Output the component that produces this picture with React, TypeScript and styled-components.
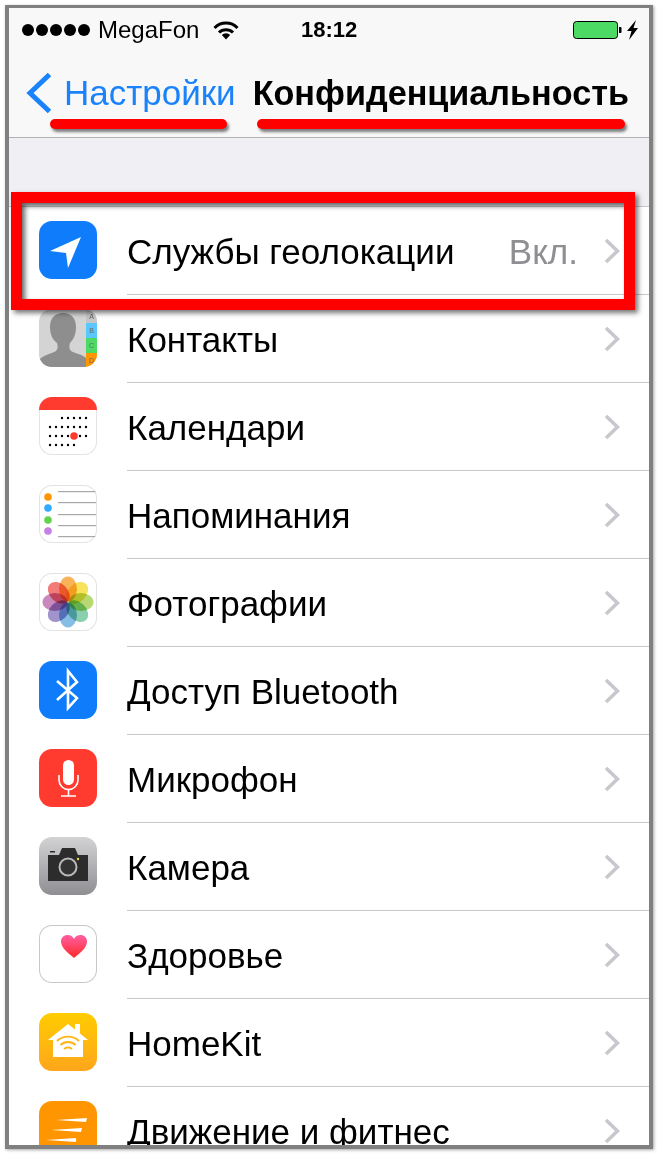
import React from 'react'
import styled, { createGlobalStyle } from 'styled-components'

const GlobalStyle = createGlobalStyle`
  html, body {
    margin: 0;
    padding: 0;
    background: #fff;
    font-family: "Liberation Sans", Arial, sans-serif;
  }
`

const Page = styled.div`
  width: 658px;
  height: 1154px;
  padding: 5px;
  box-sizing: border-box;
  overflow: hidden;
`

const Frame = styled.div`
  position: relative;
  width: 648px;
  height: 1144px;
  box-sizing: border-box;
  border: solid #808080;
  border-width: 3px 4px 4px 4px;
  box-shadow: 1px 1px 3px rgba(0, 0, 0, 0.35);
  overflow: hidden;
  background: #fff;
  display: flex;
  flex-direction: column;
`

const Header = styled.header`
  height: 130px;
  box-sizing: border-box;
  flex: none;
  background: #f8f8f8;
  border-bottom: 1px solid #b2b2b2;
  display: flex;
  flex-direction: column;
`

const StatusBar = styled.div`
  height: 44px;
  flex: none;
  padding: 0 10px 0 13px;
  display: flex;
  align-items: center;
  color: #000;
  font-size: 24px;
`

const Dots = styled.div`
  display: flex;
  gap: 2px;
  margin-right: 8px;
`

const Dot = styled.span`
  width: 12px;
  height: 12px;
  border-radius: 50%;
  background: #000;
`

const Carrier = styled.span`
  width: 115px;
`

const Time = styled.span`
  margin-left: 62px;
  margin-right: auto;
  font-size: 22px;
  font-weight: 700;
`

const NavBar = styled.nav`
  flex: 1;
  display: flex;
  align-items: center;
  padding: 0 0 3px 17px;
`

const BackLabel = styled.span`
  color: #1a82fb;
  font-size: 35px;
  margin-left: 12px;
  margin-right: 17px;
  white-space: nowrap;
`

const Title = styled.span`
  color: #000;
  font-size: 34.2px;
  font-weight: 700;
  white-space: nowrap;
`

const Gap = styled.div`
  height: 69px;
  box-sizing: border-box;
  flex: none;
  background: #efeff4;
  border-bottom: 1px solid #c8c7cc;
`

const List = styled.div`
  flex: 1;
  background: #fff;
`

const Row = styled.div`
  height: 88px;
  padding-left: 30px;
  display: flex;
  align-items: center;
`

const Icon = styled.div<{ $bg: string; $edge?: string }>`
  width: 58px;
  height: 58px;
  margin-top: -2px;
  flex: none;
  border-radius: 13px;
  overflow: hidden;
  background: ${(p) => p.$bg};
  box-shadow: ${(p) => (p.$edge ? `inset 0 0 0 1px ${p.$edge}` : 'none')};

  svg {
    display: block;
  }
`

const RowBody = styled.div<{ $last?: boolean }>`
  flex: 1;
  align-self: stretch;
  box-sizing: border-box;
  margin-left: 30px;
  padding-right: 29px;
  display: flex;
  align-items: center;
  border-bottom: ${(p) => (p.$last ? 'none' : '1px solid #c8c7cc')};
`

const Label = styled.span`
  flex: 1;
  padding-top: 2px;
  font-size: 35px;
  color: #000;
  white-space: nowrap;
`

const Value = styled.span`
  padding-top: 2px;
  font-size: 35px;
  color: #8e8e93;
  margin-right: 26px;
`

const RedBox = styled.div`
  position: absolute;
  left: 2px;
  top: 184px;
  width: 624px;
  height: 118px;
  box-sizing: border-box;
  border: 11px solid #fe0000;
  box-shadow: 3px 3px 5px rgba(0, 0, 0, 0.55), inset 3px 3px 5px rgba(0, 0, 0, 0.6);
`

const Underline = styled.div<{ $left: number; $width: number }>`
  position: absolute;
  top: 111px;
  left: ${(p) => p.$left}px;
  width: ${(p) => p.$width}px;
  height: 10px;
  border-radius: 5px;
  background: #fe0000;
  box-shadow: 2px 3px 3px rgba(0, 0, 0, 0.5);
`

const Wifi = () => (
  <svg width="26" height="19" viewBox="0 0 26 19" style={{ flex: 'none' }}>
    <g fill="none" stroke="#000" strokeWidth="3">
      <path d="M1.5 7 A16 16 0 0 1 24.5 7" />
      <path d="M6 11.5 A10 10 0 0 1 20 11.5" />
    </g>
    <path d="M8.8 14 A6 6 0 0 1 17.2 14 L13 18.5 Z" fill="#000" />
  </svg>
)

const Battery = () => (
  <svg width="66" height="20" viewBox="0 0 66 20" style={{ flex: 'none' }}>
    <rect x="0.5" y="1.5" width="44" height="17" rx="3" fill="#4cd964" stroke="#000" />
    <path d="M46 7 h1.5 a1 1 0 0 1 1 1 v4 a1 1 0 0 1 -1 1 H46 Z" fill="#000" />
    <path d="M63 0 L54 11 H58.5 L56 20 L65 8 H60.5 Z" fill="#000" />
  </svg>
)

const BackChevron = () => (
  <svg width="26" height="42" viewBox="0 0 26 42" style={{ flex: 'none' }}>
    <path d="M23.5 2.5 L4 21 L23.5 39.5" fill="none" stroke="#1a82fb" strokeWidth="5" />
  </svg>
)

const Chevron = () => (
  <svg width="16" height="26" viewBox="0 0 16 26" style={{ flex: 'none' }}>
    <path d="M2 2 L13.5 13 L2 24" fill="none" stroke="#c7c7cc" strokeWidth="3.5" />
  </svg>
)

const Svg: React.FC<{ children: React.ReactNode }> = ({ children }) => (
  <svg width="58" height="58" viewBox="0 0 58 58">
    {children}
  </svg>
)

const LocationIcon = () => (
  <Icon $bg="#0f7dfb">
    <Svg>
      <path d="M11 30 L42 16 L29 47 L27 32 Z" fill="#fff" />
    </Svg>
  </Icon>
)

const tabs: [number, number, string, string][] = [
  [0, 14, '#c6c6c6', 'A'],
  [14, 15, '#5ac8fa', 'B'],
  [29, 15, '#4cd964', 'C'],
  [44, 14, '#ff9500', 'D'],
]

const ContactsIcon = () => (
  <Icon $bg="#d4d4d4">
    <Svg>
      <path
        d="M0 58 V51 C4 46 12 45 17 42 C19 40 19 37 18 34 C14 31 11 26 11 18 C11 9 16 4 24 4 C32 4 37 9 37 18 C37 26 34 31 31 34 C30 37 30 40 32 42 C37 45 43 45 47 49 V58 Z"
        fill="#8e8e8e"
      />
      {tabs.map(([y, h, c, l]) => (
        <g key={l}>
          <rect x="47" y={y} width="11" height={h} fill={c} />
          <text x="52.5" y={y + h / 2 + 2.5} fontSize="7" textAnchor="middle" fill="#666">
            {l}
          </text>
        </g>
      ))}
    </Svg>
  </Icon>
)

const calendarDots = [
  [21, [23, 29, 35, 41, 47]],
  [30, [11, 17, 23, 29, 35, 41, 47]],
  [39, [11, 17, 23, 29, 41, 47]],
  [48, [11, 17, 23, 29, 35]],
] as [number, number[]][]

const CalendarIcon = () => (
  <Icon $bg="#fff" $edge="#e3e3e3">
    <Svg>
      <rect width="58" height="13" fill="#ff3b30" />
      {calendarDots.map(([y, xs]) =>
        xs.map((x) => <circle key={`${x}-${y}`} cx={x} cy={y} r="1.2" fill="#000" />)
      )}
      <circle cx="35" cy="39" r="3.8" fill="#ff3b30" />
    </Svg>
  </Icon>
)

const reminderLines = [6, 17, 29, 40, 51]
const reminderDots: [number, string][] = [
  [12, '#ff9500'],
  [23, '#34aaff'],
  [35, '#62d24c'],
  [46, '#c77fe3'],
]

const RemindersIcon = () => (
  <Icon $bg="#fff" $edge="#e3e3e3">
    <Svg>
      {reminderLines.map((y) => (
        <rect key={y} x="19" y={y} width="38" height="1.2" fill="#a8a8a8" />
      ))}
      {reminderDots.map(([y, c]) => (
        <circle key={y} cx="9" cy={y} r="3.8" fill={c} />
      ))}
    </Svg>
  </Icon>
)

const petals = ['#f9b257', '#f7e25a', '#b8d872', '#8bd0ae', '#86bde5', '#a194cd', '#c88abd', '#f17c79']

const PhotosIcon = () => (
  <Icon $bg="#fff" $edge="#e3e3e3">
    <Svg>
      <g style={{ isolation: 'isolate' }}>
        {petals.map((c, i) => (
          <ellipse
            key={c}
            cx="29"
            cy="16"
            rx="9"
            ry="12.5"
            fill={c}
            transform={`rotate(${i * 45} 29 29)`}
            style={{ mixBlendMode: 'multiply' }}
          />
        ))}
      </g>
    </Svg>
  </Icon>
)

const BluetoothIcon = () => (
  <Icon $bg="#0f7dfb">
    <Svg>
      <path d="M18 20 L38 37 L29 47 V10 L38 21 L18 39" fill="none" stroke="#fff" strokeWidth="2.6" />
    </Svg>
  </Icon>
)

const MicIcon = () => (
  <Icon $bg="#ff3b30">
    <Svg>
      <rect x="24" y="11" width="11" height="25" rx="5.5" fill="#fff" />
      <path d="M20 26 V31 A9.5 9.5 0 0 0 39 31 V26 M29.5 41 V47 M22 47 H37" fill="none" stroke="#fff" strokeWidth="1.6" />
    </Svg>
  </Icon>
)

const CameraIcon = () => (
  <Icon $bg="linear-gradient(#d3d3d5, #8f8f93)">
    <Svg>
      <path d="M9 18 H20 L23 11 H36 L39 18 H49 V44 H9 Z" fill="#2c2c2c" />
      <rect x="11" y="14" width="5" height="1.5" fill="#2c2c2c" />
      <circle cx="29" cy="30" r="8.5" fill="#333" stroke="#b8b8b8" strokeWidth="2" />
      <circle cx="39" cy="22" r="1.2" fill="#e8d84a" />
    </Svg>
  </Icon>
)

const HealthIcon = () => (
  <Icon $bg="#fff" $edge="#c8c8c8">
    <Svg>
      <defs>
        <linearGradient id="heart" x1="0" y1="0" x2="0" y2="1">
          <stop offset="0" stopColor="#ff5fa2" />
          <stop offset="1" stopColor="#ff2a2a" />
        </linearGradient>
      </defs>
      <path
        d="M35 33 C29 28 22 23 22 16.5 C22 12.5 25 10 28.5 10 C31.5 10 33.8 11.5 35 14 C36.2 11.5 38.5 10 41.5 10 C45 10 48 12.5 48 16.5 C48 23 41 28 35 33 Z"
        fill="url(#heart)"
      />
    </Svg>
  </Icon>
)

const HomeKitIcon = () => (
  <Icon $bg="linear-gradient(#ffcc00, #ffa61c)">
    <Svg>
      <path d="M9 27 L29 11 L36 16.5 V11 H41 V20.5 L49 27 H44 V44 H14 V27 Z" fill="#fff" />
      <g fill="none" stroke="#fdb515" strokeWidth="1.9">
        <path d="M18 28 A16 16 0 0 1 40 28" />
        <path d="M21.5 32 A11 11 0 0 1 36.5 32" />
        <path d="M25 36 A6 6 0 0 1 33 36" />
      </g>
    </Svg>
  </Icon>
)

const MotionIcon = () => (
  <Icon $bg="#ff9500">
    <Svg>
      <path d="M17 19 L48 17 L47 21 Z M12 29 L43 27 L42 31 Z M7 39 L37 37 L37 41 Z" fill="#fff" />
    </Svg>
  </Icon>
)

const rows: { icon: React.ReactNode; label: string; value?: string }[] = [
  { icon: <LocationIcon />, label: 'Службы геолокации', value: 'Вкл.' },
  { icon: <ContactsIcon />, label: 'Контакты' },
  { icon: <CalendarIcon />, label: 'Календари' },
  { icon: <RemindersIcon />, label: 'Напоминания' },
  { icon: <PhotosIcon />, label: 'Фотографии' },
  { icon: <BluetoothIcon />, label: 'Доступ Bluetooth' },
  { icon: <MicIcon />, label: 'Микрофон' },
  { icon: <CameraIcon />, label: 'Камера' },
  { icon: <HealthIcon />, label: 'Здоровье' },
  { icon: <HomeKitIcon />, label: 'HomeKit' },
  { icon: <MotionIcon />, label: 'Движение и фитнес' },
]

export default function App() {
  return (
    <Page>
      <GlobalStyle />
      <Frame>
        <Header>
          <StatusBar>
            <Dots>
              {[0, 1, 2, 3, 4].map((i) => (
                <Dot key={i} />
              ))}
            </Dots>
            <Carrier>MegaFon</Carrier>
            <Wifi />
            <Time>18:12</Time>
            <Battery />
          </StatusBar>
          <NavBar>
            <BackChevron />
            <BackLabel>Настройки</BackLabel>
            <Title>Конфиденциальность</Title>
          </NavBar>
        </Header>
        <Gap />
        <List>
          {rows.map((r, i) => (
            <Row key={r.label}>
              {r.icon}
              <RowBody $last={i === rows.length - 1}>
                <Label>{r.label}</Label>
                {r.value && <Value>{r.value}</Value>}
                <Chevron />
              </RowBody>
            </Row>
          ))}
        </List>
        <Underline $left={41} $width={177} />
        <Underline $left={248} $width={368} />
        <RedBox />
      </Frame>
    </Page>
  )
}
